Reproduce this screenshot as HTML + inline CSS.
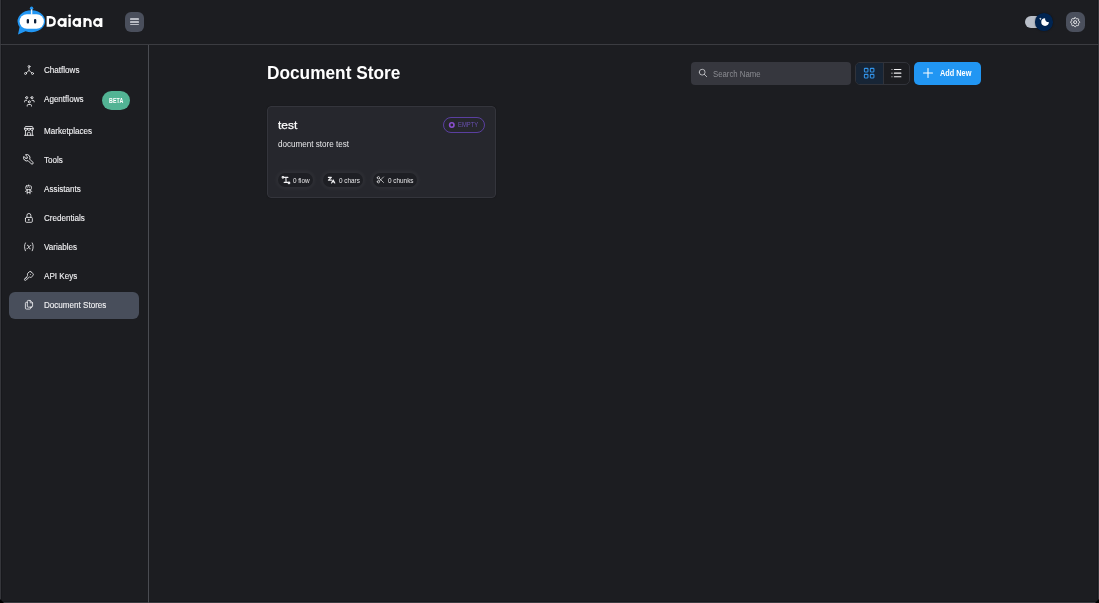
<!DOCTYPE html>
<html><head><meta charset="utf-8">
<style>
*{margin:0;padding:0;box-sizing:border-box}
body{will-change:transform}
html,body{width:1099px;height:603px;overflow:hidden;background:#1c1d21;font-family:"Liberation Sans",sans-serif;color:#fff}
.a{position:absolute}
svg.i{position:absolute;fill:none;stroke:#f4f4f6;stroke-width:1.7;stroke-linecap:round;stroke-linejoin:round}
#frameL{left:0;top:0;width:1px;height:603px;background:#35363b}
#frameR{left:1098px;top:0;width:1px;height:603px;background:#35363b}
#frameB{left:0;top:602px;width:1099px;height:1px;background:#3a3b40}
#hdrline{left:0;top:44px;width:1099px;height:1px;background:#3b3c41}
#sideline{left:148px;top:45px;width:1px;height:558px;background:#4a4c52}
.logo-t{left:46px;top:13.2px;font-weight:bold;font-size:15px;letter-spacing:.2px;color:#fff;line-height:17px;transform:scaleX(1.12);transform-origin:0 0}
.hamb{left:124.8px;top:12px;width:19.1px;height:20.1px;border-radius:6px;background:#4a4f5c}
.hamb i{position:absolute;left:5px;width:9.3px;height:1.6px;background:#b9bcc4;border-radius:.4px}
.nav{left:43.8px;font-size:8.9px;color:#f2f2f4;line-height:10px;transform:scaleX(.91);transform-origin:0 0;-webkit-text-stroke:.12px #f2f2f4}
.active{left:9px;top:292px;width:130px;height:27px;border-radius:6px;background:#484e5b}
.beta{left:101.5px;top:90.9px;width:28.4px;height:19.1px;border-radius:10px;background:#52b394}
.betat{left:109px;top:97px;font-size:6.6px;font-weight:bold;color:#fff;line-height:8px;letter-spacing:.1px;transform:scaleX(.8);transform-origin:0 0}
.title{left:267.2px;top:62.75px;font-size:18.5px;font-weight:bold;line-height:20px;transform:scaleX(.933);transform-origin:0 0}
.card{left:267px;top:106px;width:229px;height:91.5px;border-radius:4px;background:#26272d;border:1px solid #34353c;box-shadow:0 0 1px rgba(0,0,0,.5)}
.chip{height:13.8px;top:173.1px;border-radius:7px;background:#1e1f24;box-shadow:0 0 4px 1.5px rgba(255,255,255,.055);}
.ct{font-size:7.1px;color:#e6e6e8;line-height:8px;top:176.5px;transform:scaleX(.9);transform-origin:0 0}
.search{left:691px;top:62px;width:160px;height:22.5px;border-radius:4px;background:#36373e}
.grp{left:855px;top:62px;width:55px;height:23px;border-radius:5px;border:1px solid #31333a}
.addbtn{left:914px;top:62px;width:67px;height:23px;border-radius:5px;background:#2196f3}
</style></head>
<body>
<div class="a" id="frameL"></div>
<div class="a" id="frameR"></div>
<div class="a" id="frameB"></div>
<div class="a" style="left:1px;top:0;width:1px;height:602px;background:#17181c"></div>
<div class="a" style="left:1097px;top:0;width:1px;height:602px;background:#17181c"></div>
<div class="a" style="left:0;top:601px;width:1099px;height:1px;background:#17181c"></div>
<svg class="a" style="left:0;top:598px" width="5" height="5"><path d="M0 1L4 5H0Z" fill="#000"/></svg>
<svg class="a" style="left:1094px;top:598px" width="5" height="5"><path d="M5 1L1 5H5Z" fill="#000"/></svg>
<div class="a" id="hdrline"></div>
<div class="a" id="sideline"></div>

<!-- logo -->
<svg class="a" style="left:0;top:0" width="50" height="40" viewBox="0 0 50 40">
  <path d="M18 34.5 L19.6 27 A13.8 11 0 1 1 25.5 31.2 Z" fill="#2196f3"/>
  <circle cx="31.6" cy="8.2" r="1.7" fill="#2196f3"/>
  <rect x="30.9" y="9.4" width="1.4" height="5.2" fill="#e8f2fc"/>
  <rect x="19.6" y="14.2" width="24.3" height="14.6" rx="7.3" fill="#fff"/>
  <rect x="26.7" y="19" width="2.3" height="4.5" rx="1.1" fill="#0b1d38"/>
  <rect x="34" y="19" width="2.3" height="4.5" rx="1.1" fill="#0b1d38"/>
</svg>
<svg class="a" style="left:0;top:0" width="110" height="40" viewBox="0 0 110 40" fill="none" stroke="#fff" stroke-width="2.4">
  <path d="M47.8 17.2 L50.6 17.2 C53.1 17.2 54.7 19 54.7 21.3 C54.7 23.7 53.1 25.45 50.6 25.45 L47.8 25.45 Z" stroke-linejoin="miter"/>
  <ellipse cx="61.8" cy="22.5" rx="3.25" ry="3.2"/><path d="M65.4 18.1V27"/>
  <path d="M69.6 18.2V26.9"/><circle cx="69.6" cy="15.85" r="1.45" fill="#fff" stroke="none"/>
  <ellipse cx="76.8" cy="22.5" rx="3.25" ry="3.2"/><path d="M79.7 18.1V27"/>
  <path d="M84.6 18.1V27M84.6 22.4A2.95 3 0 0 1 90.5 22.4V27"/>
  <ellipse cx="97.5" cy="22.5" rx="3.25" ry="3.2"/><path d="M101.2 18.1V27"/>
</svg>
<div class="a hamb"><i style="top:6.05px"></i><i style="top:8.95px"></i><i style="top:11.85px"></i></div>

<!-- header right -->
<div class="a" style="left:1025px;top:15.7px;width:20px;height:12.3px;border-radius:6.2px;background:#b9bfc9"></div>
<div class="a" style="left:1035.2px;top:13px;width:17.6px;height:17.6px;border-radius:50%;background:#002451;box-shadow:0 0 1.5px rgba(0,0,0,.6)"></div>
<svg class="a" style="left:1038.4px;top:16.2px" width="11.25" height="11.25" viewBox="0 0 20 20"><path fill="#fff" d="M4.2 2.5l-.7 1.8-1.8.7 1.8.7.7 1.8.6-1.8L6.7 5l-1.9-.7-.6-1.8zm15 8.3a6.7 6.7 0 11-6.6-6.6 5.8 5.8 0 006.6 6.6z"/></svg>
<div class="a" style="left:1066px;top:12.2px;width:19.2px;height:19.7px;border-radius:6.5px;background:#4b505d"></div>
<svg class="i" style="left:1069.35px;top:15.85px;stroke:#fff;stroke-width:1.6" width="12.3" height="12.3" viewBox="0 0 24 24"><path d="M10.325 4.317c.426 -1.756 2.924 -1.756 3.35 0a1.724 1.724 0 0 0 2.573 1.066c1.543 -.94 3.31 .826 2.37 2.37a1.724 1.724 0 0 0 1.065 2.572c1.756 .426 1.756 2.924 0 3.35a1.724 1.724 0 0 0 -1.066 2.573c.94 1.543 -.826 3.31 -2.37 2.37a1.724 1.724 0 0 0 -2.572 1.065c-.426 1.756 -2.924 1.756 -3.35 0a1.724 1.724 0 0 0 -2.573 -1.066c-1.543 .94 -3.31 -.826 -2.37 -2.37a1.724 1.724 0 0 0 -1.065 -2.572c-1.756 -.426 -1.756 -2.924 0 -3.35a1.724 1.724 0 0 0 1.066 -2.573c-.94 -1.543 .826 -3.31 2.37 -2.37c1 .608 2.296 .07 2.572 -1.065z"/><path d="M9 12a3 3 0 1 0 6 0a3 3 0 0 0 -6 0"/></svg>

<!-- sidebar -->
<div class="a active"></div>
<svg class="i" style="left:23px;top:64px;stroke-width:1.5" width="12" height="12" viewBox="0 0 24 24"><circle cx="12" cy="5" r="2"/><circle cx="5" cy="19" r="2"/><circle cx="19" cy="19" r="2"/><path d="M6.5 17.5l5.5 -4.5l5.5 4.5"/><path d="M12 7v6"/></svg>
<div class="a nav" style="top:64.5px">Chatflows</div>
<svg class="i" style="left:22.6px;top:94.7px" width="12.7" height="12.7" viewBox="0 0 24 24"><path d="M10 13a2 2 0 1 0 4 0a2 2 0 0 0 -4 0"/><path d="M8 21v-1a2 2 0 0 1 2 -2h4a2 2 0 0 1 2 2v1"/><path d="M15 5a2 2 0 1 0 4 0a2 2 0 0 0 -4 0"/><path d="M17 10h2a2 2 0 0 1 2 2v1"/><path d="M5 5a2 2 0 1 0 4 0a2 2 0 0 0 -4 0"/><path d="M3 13v-1a2 2 0 0 1 2 -2h2"/></svg>
<div class="a nav" style="top:94px">Agentflows</div>
<div class="a beta"></div><div class="a betat">BETA</div>
<svg class="i" style="left:23.05px;top:124.95px" width="11.8" height="11.8" viewBox="0 0 24 24"><path d="M3 21l18 0"/><path d="M3 7v1a3 3 0 0 0 6 0v-1m0 1a3 3 0 0 0 6 0v-1m0 1a3 3 0 0 0 6 0v-1h-18l2 -4h14l2 4"/><path d="M5 21l0 -10.15"/><path d="M19 21l0 -10.15"/><path d="M9 21v-4a2 2 0 0 1 2 -2h2a2 2 0 0 1 2 2v4"/></svg>
<div class="a nav" style="top:125.5px">Marketplaces</div>
<svg class="i" style="left:22.2px;top:153.2px" width="12.7" height="12.7" viewBox="0 0 24 24"><path d="M7 10h3v-3l-3.5 -3.5a6 6 0 0 1 8 8l6 6a2 2 0 0 1 -3 3l-6 -6a6 6 0 0 1 -8 -8l3.5 3.5"/></svg>
<div class="a nav" style="top:154.5px">Tools</div>
<svg class="i" style="left:23.4px;top:183.6px" width="11.2" height="11.2" viewBox="0 0 24 24"><path d="M8 4h8a2 2 0 0 1 2 2v4a2 2 0 0 1 -2 2h-8a2 2 0 0 1 -2 -2v-4a2 2 0 0 1 2 -2z"/><path d="M12 2v2"/><path d="M9 12v9"/><path d="M15 12v9"/><path d="M5 16l4 -2"/><path d="M15 14l4 2"/><path d="M9 18h6"/><path d="M10 8v.01"/><path d="M14 8v.01"/></svg>
<div class="a nav" style="top:183.5px">Assistants</div>
<svg class="i" style="left:23.1px;top:212.1px" width="11.8" height="11.8" viewBox="0 0 24 24"><path d="M5 13a2 2 0 0 1 2 -2h10a2 2 0 0 1 2 2v6a2 2 0 0 1 -2 2h-10a2 2 0 0 1 -2 -2v-6z"/><path d="M11 16a1 1 0 1 0 2 0a1 1 0 0 0 -2 0"/><path d="M8 11v-4a4 4 0 1 1 8 0v4"/></svg>
<div class="a nav" style="top:212.5px">Credentials</div>
<svg class="i" style="left:23.15px;top:241.45px" width="11.7" height="11.7" viewBox="0 0 24 24"><path d="M5 4c-2.5 5 -2.5 10 0 16m14 -16c2.5 5 2.5 10 0 16m-10 -11h1c1 0 1 1 2.016 3.527c.984 2.473 .984 3.473 1.984 3.473h1"/><path d="M8 16c1.5 0 3 -2 4 -3.5s2.5 -3.5 4 -3.5"/></svg>
<div class="a nav" style="top:241.5px">Variables</div>
<svg class="i" style="left:23.15px;top:269.9px" width="11.8" height="11.8" viewBox="0 0 24 24"><path d="M16.555 3.843l3.602 3.602a2.877 2.877 0 0 1 0 4.069l-2.643 2.643a2.877 2.877 0 0 1 -4.069 0l-.301 -.301l-6.558 6.558a2 2 0 0 1 -1.239 .578l-.175 .008h-1.172a1 1 0 0 1 -.993 -.883l-.007 -.117v-1.172a2 2 0 0 1 .467 -1.284l.119 -.13l.414 -.414h2v-2h2v-2l2.144 -2.144l-.301 -.301a2.877 2.877 0 0 1 0 -4.069l2.643 -2.643a2.877 2.877 0 0 1 4.069 0z"/><path d="M15 9h.01"/></svg>
<div class="a nav" style="top:270.5px">API Keys</div>
<svg class="i" style="left:23px;top:299.3px" width="11.5" height="11.5" viewBox="0 0 24 24"><path d="M15 3v4a1 1 0 0 0 1 1h4"/><path d="M18 17h-7a2 2 0 0 1 -2 -2v-10a2 2 0 0 1 2 -2h4l5 5v7a2 2 0 0 1 -2 2z"/><path d="M16 17v2a2 2 0 0 1 -2 2h-7a2 2 0 0 1 -2 -2v-10a2 2 0 0 1 2 -2h2"/></svg>
<div class="a nav" style="top:299.5px">Document Stores</div>

<!-- main -->
<div class="a title">Document Store</div>
<div class="a search"></div>
<svg class="i" style="left:697.6px;top:68px;stroke:#d0d1d5;stroke-width:1.9" width="10" height="10" viewBox="0 0 24 24"><path d="M10 10m-7 0a7 7 0 1 0 14 0a7 7 0 1 0 -14 0"/><path d="M21 21l-6 -6"/></svg>
<div class="a" style="left:712.8px;top:68.5px;font-size:8.6px;color:#8b8c92;line-height:10px;transform:scaleX(.905);transform-origin:0 0">Search Name</div>
<div class="a grp"><div style="position:absolute;left:0;top:0;width:26.6px;height:21px;background:#172536;border-radius:4px 0 0 4px"></div><div style="position:absolute;left:26.6px;top:0;width:1px;height:21px;background:#31333a"></div></div>
<svg class="i" style="left:862px;top:66px;stroke:#3293e8;stroke-width:1.8" width="14.3" height="14.3" viewBox="0 0 24 24"><path d="M4 4m0 1a1 1 0 0 1 1 -1h4a1 1 0 0 1 1 1v4a1 1 0 0 1 -1 1h-4a1 1 0 0 1 -1 -1z"/><path d="M14 4m0 1a1 1 0 0 1 1 -1h4a1 1 0 0 1 1 1v4a1 1 0 0 1 -1 1h-4a1 1 0 0 1 -1 -1z"/><path d="M4 14m0 1a1 1 0 0 1 1 -1h4a1 1 0 0 1 1 1v4a1 1 0 0 1 -1 1h-4a1 1 0 0 1 -1 -1z"/><path d="M14 14m0 1a1 1 0 0 1 1 -1h4a1 1 0 0 1 1 1v4a1 1 0 0 1 -1 1h-4a1 1 0 0 1 -1 -1z"/></svg>
<svg class="i" style="left:889px;top:66px;stroke-width:1.8" width="14.3" height="14.3" viewBox="0 0 24 24"><path d="M9 6l11 0"/><path d="M9 12l11 0"/><path d="M9 18l11 0"/><path d="M5 6l0 .01"/><path d="M5 12l0 .01"/><path d="M5 18l0 .01"/></svg>
<div class="a addbtn"></div>
<svg class="i" style="left:922.1px;top:67.1px;stroke:#fff;stroke-width:2.1" width="12" height="12" viewBox="0 0 24 24"><path d="M12 3v18"/><path d="M3 12h18"/></svg>
<div class="a" style="left:939.7px;top:68.1px;font-size:8.4px;font-weight:bold;color:#fff;line-height:10px;transform:scaleX(.875);transform-origin:0 0">Add New</div>

<div class="a card"></div>
<div class="a" style="left:277.6px;top:117.9px;font-size:11.2px;color:#fff;line-height:14px;-webkit-text-stroke:.25px #fff;transform:scaleX(1.07);transform-origin:0 0">test</div>
<div class="a" style="left:277.5px;top:138.8px;font-size:8.6px;color:#e8e8ea;line-height:10px;transform:scaleX(.94);transform-origin:0 0">document store test</div>
<div class="a" style="left:442.7px;top:117px;width:42.2px;height:15.8px;border-radius:8px;border:1px solid #5a3fa0"></div>
<svg class="a" style="left:0;top:0" width="500" height="200" viewBox="0 0 500 200"><circle cx="451.8" cy="125" r="2.2" fill="none" stroke="#8a4fd0" stroke-width="1.6"/></svg>
<div class="a" style="left:457.9px;top:120.9px;font-size:6.5px;color:#6a50b4;line-height:8px;transform:scaleX(.9);transform-origin:0 0">EMPTY</div>
<div class="a chip" style="left:277.8px;width:35.5px"></div>
<div class="a chip" style="left:323.2px;width:39.8px"></div>
<div class="a chip" style="left:373.1px;width:43.9px"></div>
<svg class="a" style="left:0;top:0" width="300" height="200" viewBox="0 0 300 200" fill="none" stroke="#f0f0f2" stroke-width="1.1" stroke-linecap="round" stroke-linejoin="round"><circle cx="282.9" cy="177.3" r=".8"/><path d="M284.1 177.4H287.9M285.9 177.4L286.1 182.4M284.2 182.4H287.8"/><circle cx="289" cy="182.9" r=".8"/></svg>
<div class="a ct" style="left:292.8px">0 flow</div>
<svg class="a" style="left:0;top:0" width="400" height="200" viewBox="0 0 400 200" fill="none" stroke="#f0f0f2" stroke-width="1.1" stroke-linecap="round" stroke-linejoin="round"><path d="M328.4 177.4H331.4L328.4 180.1H331.5"/><path d="M331.6 183L333.2 179.9L334.8 183M332.2 182H334.2"/></svg>
<div class="a ct" style="left:338.6px">0 chars</div>
<svg class="i" style="left:376px;top:175.3px;stroke-width:1.7" width="9.5" height="9.5" viewBox="0 0 24 24"><path d="M6 7m-3 0a3 3 0 1 0 6 0a3 3 0 1 0 -6 0"/><path d="M6 17m-3 0a3 3 0 1 0 6 0a3 3 0 1 0 -6 0"/><path d="M8.6 8.6l10.4 10.4"/><path d="M8.6 15.4l10.4 -10.4"/></svg>
<div class="a ct" style="left:387.9px">0 chunks</div>
</body></html>
